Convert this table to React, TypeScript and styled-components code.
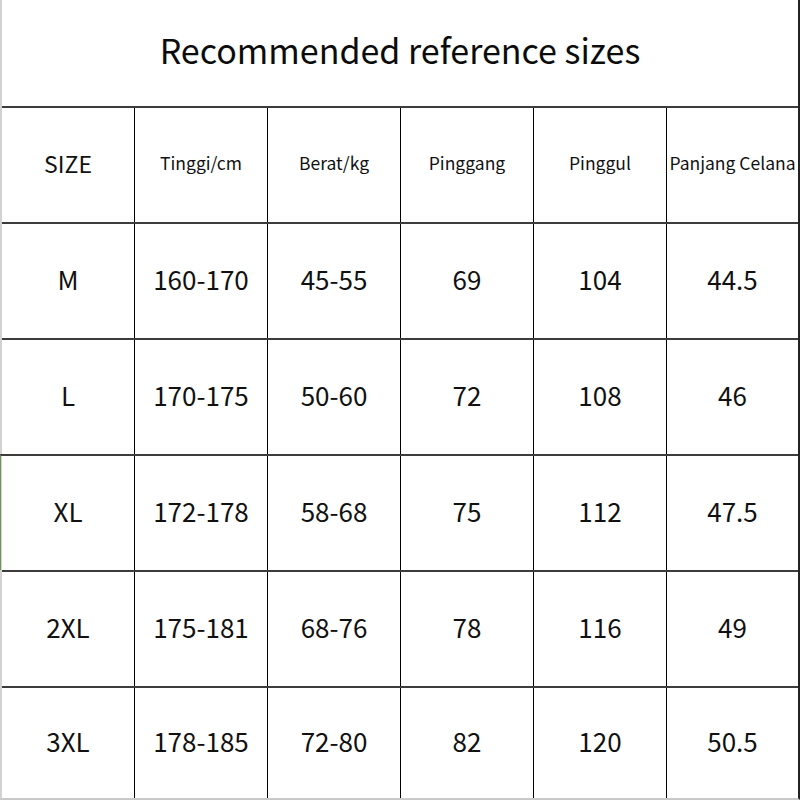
import styled, { createGlobalStyle } from "styled-components";

const GlobalStyle = createGlobalStyle`
  html, body {
    margin: 0;
    padding: 0;
    background: #fff;
  }
  body {
    font-family: "Noto Sans CJK SC", "Noto Sans", sans-serif;
    color: #111;
  }
`;

const Chart = styled.div`
  box-sizing: border-box;
  width: 800px;
  height: 800px;
  display: flex;
  flex-direction: column;
  border-left: 2px solid #d2d2d2;
  border-right: 2px solid #222;
  border-bottom: 2px solid #c9c9c9;
  background: #fff;
`;

const Title = styled.div`
  height: 106px;
  display: flex;
  align-items: center;
  justify-content: center;
  padding-bottom: 8px;
  box-sizing: border-box;
  font-size: 34px;
  color: #0c0c0c;
`;

const Row = styled.div<{ $last?: boolean; $mark?: boolean }>`
  box-sizing: border-box;
  display: grid;
  grid-template-columns: 132px 133px 133px 133px 133px 132px;
  height: ${(p) => (p.$last ? "auto" : "116px")};
  flex: ${(p) => (p.$last ? "1" : "none")};
  border-top: 2px solid #3c3c3c;
  margin-left: ${(p) => (p.$mark ? "-2px" : "0")};
  padding-left: ${(p) => (p.$mark ? "1px" : "0")};
  border-left: ${(p) => (p.$mark ? "1px solid #6a9a55" : "none")};
`;

const Cell = styled.div<{ $size?: number }>`
  display: flex;
  align-items: center;
  justify-content: center;
  padding-bottom: 5px;
  white-space: nowrap;
  font-size: ${(p) => p.$size ?? 26}px;
  color: #111;
  & + & {
    border-left: 1px solid #000;
  }
`;

const headers = ["Tinggi/cm", "Berat/kg", "Pinggang", "Pinggul", "Panjang Celana"];

const rows = [
  ["M", "160-170", "45-55", "69", "104", "44.5"],
  ["L", "170-175", "50-60", "72", "108", "46"],
  ["XL", "172-178", "58-68", "75", "112", "47.5"],
  ["2XL", "175-181", "68-76", "78", "116", "49"],
  ["3XL", "178-185", "72-80", "82", "120", "50.5"],
];

const App = () => {
  return (
    <>
      <GlobalStyle />
      <Chart>
        <Title>Recommended reference sizes</Title>
        <Row>
          <Cell $size={23}>SIZE</Cell>
          {headers.map((h) => (
            <Cell $size={17.5} key={h}>
              {h}
            </Cell>
          ))}
        </Row>
        {rows.map((r, i) => (
          <Row key={r[0]} $last={i === rows.length - 1} $mark={r[0] === "XL"}>
            {r.map((v, j) => (
              <Cell key={j}>{v}</Cell>
            ))}
          </Row>
        ))}
      </Chart>
    </>
  );
};

export default App;
